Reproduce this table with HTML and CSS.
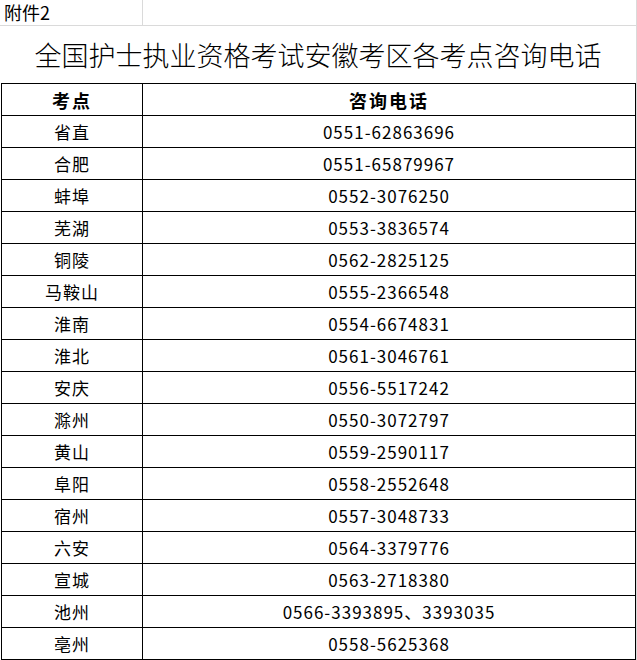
FILE: index.html
```html
<!DOCTYPE html>
<html lang="zh-CN">
<head>
<meta charset="utf-8">
<title>全国护士执业资格考试安徽考区各考点咨询电话</title>
<link rel="stylesheet" href="styles.css">
</head>
<body>
<div class="sheet">
  <div class="top-row">
    <div class="top-cell first">附件2</div>
    <div class="top-cell"></div>
  </div>
  <div class="title-row">全国护士执业资格考试安徽考区各考点咨询电话</div>
  <div class="grid">
    <div class="cell head">考点</div><div class="cell head">咨询电话</div>
    <div class="cell">省直</div><div class="cell">0551-62863696</div>
    <div class="cell">合肥</div><div class="cell">0551-65879967</div>
    <div class="cell">蚌埠</div><div class="cell">0552-3076250</div>
    <div class="cell">芜湖</div><div class="cell">0553-3836574</div>
    <div class="cell">铜陵</div><div class="cell">0562-2825125</div>
    <div class="cell">马鞍山</div><div class="cell">0555-2366548</div>
    <div class="cell">淮南</div><div class="cell">0554-6674831</div>
    <div class="cell">淮北</div><div class="cell">0561-3046761</div>
    <div class="cell">安庆</div><div class="cell">0556-5517242</div>
    <div class="cell">滁州</div><div class="cell">0550-3072797</div>
    <div class="cell">黄山</div><div class="cell">0559-2590117</div>
    <div class="cell">阜阳</div><div class="cell">0558-2552648</div>
    <div class="cell">宿州</div><div class="cell">0557-3048733</div>
    <div class="cell">六安</div><div class="cell">0564-3379776</div>
    <div class="cell">宣城</div><div class="cell">0563-2718380</div>
    <div class="cell">池州</div><div class="cell">0566-3393895、3393035</div>
    <div class="cell">亳州</div><div class="cell">0558-5625368</div>
  </div>
</div>
</body>
</html>
```
FILE: styles.css
```css
html, body {
  margin: 0;
  padding: 0;
  background: #ffffff;
}
body {
  font-family: "Noto Sans CJK SC", "Noto Sans", sans-serif;
  color: #000000;
}
.sheet {
  width: 637px;
  height: 660px;
  box-sizing: border-box;
  border-right: 1px solid #dadada;
  overflow: hidden;
}
.top-row {
  display: flex;
  height: 26px;
  box-sizing: border-box;
  border-bottom: 1px solid #dadada;
}
.top-cell {
  flex: 1;
  font-size: 18px;
  line-height: 25px;
  padding-left: 4px;
}
.top-cell.first {
  flex: 0 0 143px;
  box-sizing: border-box;
  border-right: 1px solid #dadada;
}
.title-row {
  height: 57px;
  line-height: 57px;
  text-align: center;
  font-size: 27px;
  font-weight: 300;
}
.grid {
  margin-left: 1px;
  width: 635px;
  box-sizing: border-box;
  display: grid;
  grid-template-columns: 141px 493px;
  grid-auto-rows: 32px;
  border-left: 1px solid #000;
  border-top: 1px solid #000;
}
.cell {
  border-right: 1px solid #000;
  border-bottom: 1px solid #000;
  display: flex;
  align-items: center;
  justify-content: center;
  font-size: 17px;
  letter-spacing: 1px;
}
.cell.head {
  font-size: 18px;
  font-weight: 700;
  letter-spacing: 2px;
}
```
